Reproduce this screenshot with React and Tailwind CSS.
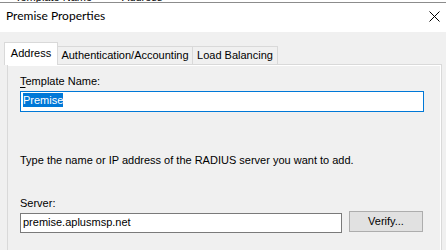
export default function App() {
  const sans = { fontFamily: '"Liberation Sans", Arial, sans-serif' };
  return (
    <div className="w-[446px] h-[250px] overflow-hidden bg-[#f0f0f0] text-black text-[11px] leading-[13px]" style={sans}>
      {/* background window fragments */}
      <div className="h-[2px] overflow-hidden bg-white flex">
        <span className="ml-[15px] -mt-[9px] leading-[13px] whitespace-nowrap">Template Name</span>
        <span className="ml-[30px] -mt-[9px] leading-[13px] whitespace-nowrap">Address</span>
      </div>
      <div className="h-[1px] bg-[#8c8c8c]" />
      {/* title bar */}
      <div className="h-[29px] bg-white flex items-start">
        <span className="ml-[6px] mt-[5px] text-[12px] leading-[16px] whitespace-nowrap" style={{ fontFamily: 'Lato, "Noto Sans", sans-serif' }}>
          Premise Properties
        </span>
        <svg className="ml-auto mr-[6px] mt-[8px]" width="11" height="11" viewBox="0 0 11 11">
          <path d="M0.5 0.5 L10.5 10.5 M10.5 0.5 L0.5 10.5" stroke="#000" strokeWidth="1" fill="none" />
        </svg>
      </div>
      {/* tabs */}
      <div className="pt-[10px] pl-[4px] flex items-end">
        <div className="relative z-10 w-[54px] h-[23px] bg-white border-l border-t border-r border-[#d9d9d9] flex justify-center pt-[4px] whitespace-nowrap">
          Address
        </div>
        <div className="w-[135px] h-[19px] border-t border-r border-[#d9d9d9] flex justify-center pt-[2px] whitespace-nowrap">
          Authentication/Accounting
        </div>
        <div className="w-[85px] h-[19px] border-t border-r border-[#d9d9d9] flex justify-center pt-[2px] whitespace-nowrap">
          Load Balancing
        </div>
      </div>
      {/* panel */}
      <div className="relative z-[1] -mt-[1px] ml-[7px] w-[435px] h-[200px] border border-[#d9d9d9] bg-[#f0f0f0] shadow-[inset_0_1px_0_#ffffff,inset_-1px_0_0_#ffffff] pl-[12px] flex flex-col items-start">
        <div className="mt-[10px] h-[13px] whitespace-nowrap">
          <span className="underline underline-offset-[2px]">T</span>emplate Name:
        </div>
        <div className="mt-[3px] w-[404px] h-[21px] border border-[#0078d7] bg-white pl-[2px] pt-[1px]">
          <span className="inline-block h-[14px] leading-[14px] bg-[#0078d7] text-white">Premise</span>
        </div>
        <div className="mt-[42px] h-[13px] whitespace-nowrap">
          Type the name or IP address of the RADIUS server you want to add.
        </div>
        <div className="mt-[30px] h-[13px] whitespace-nowrap">Server:</div>
        <div className="mt-[1px] flex items-start gap-[7px]">
          <div className="mt-[2px] w-[322px] h-[20px] border border-[#7a7a7a] bg-white pl-[2px] pt-[2px] whitespace-nowrap">
            premise.aplusmsp.net
          </div>
          <div className="w-[74px] h-[21px] border border-[#adadad] bg-[#e1e1e1] flex items-center justify-center whitespace-nowrap">
            Verify...
          </div>
        </div>
      </div>
    </div>
  );
}
